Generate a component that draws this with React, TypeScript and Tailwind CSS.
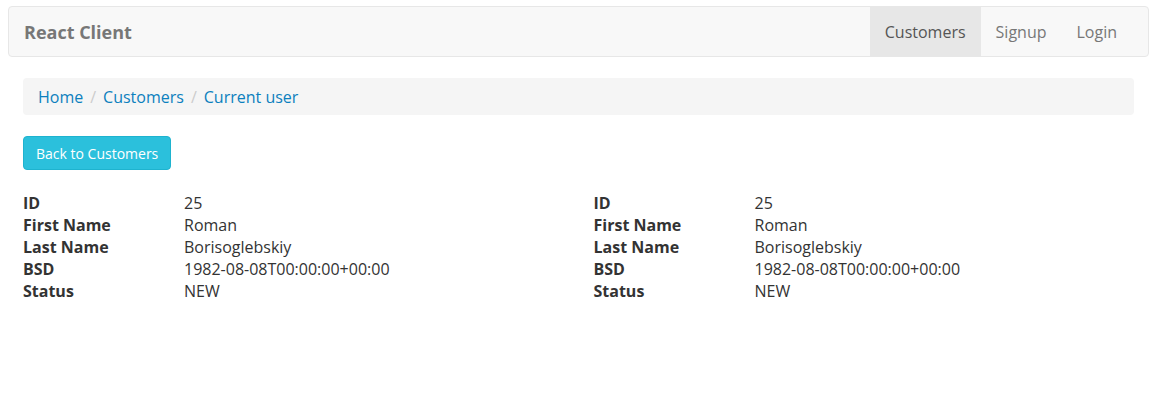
import React from "react";

const rows: [string, string][] = [
  ["ID", "25"],
  ["First Name", "Roman"],
  ["Last Name", "Borisoglebskiy"],
  ["BSD", "1982-08-08T00:00:00+00:00"],
  ["Status", "NEW"],
];

function Details() {
  return (
    <div className="flex flex-col">
      {rows.map(([k, v]) => (
        <div key={k} className="flex leading-[22px]">
          <div className="w-[161px] font-bold text-[#333]">{k}</div>
          <div className="text-[#333]">{v}</div>
        </div>
      ))}
    </div>
  );
}

export default function App() {
  return (
    <div
      className="min-h-[414px] bg-white text-[16px] text-[#333]"
      style={{ fontFamily: '"Open Sans", "Noto Sans", sans-serif' }}
    >
      <div className="pt-[6px] px-[8px]">
        <nav className="flex h-[51px] items-stretch justify-between rounded-[4px] border border-[#e7e7e7] bg-[#f8f8f8] pl-[15px] pr-[16px]">
          <div className="flex items-center pt-[1px] text-[18px] font-bold text-[#777]">React Client</div>
          <ul className="flex items-stretch">
            <li className="flex items-center bg-[#e7e7e7] px-[15px] text-[#555]">Customers</li>
            <li className="flex items-center px-[15px] text-[#777]">Signup</li>
            <li className="flex items-center px-[15px] text-[#777]">Login</li>
          </ul>
        </nav>
      </div>
      <div className="px-[23px] pt-[21px]">
        <div className="flex h-[37px] items-center rounded-[4px] bg-[#f5f5f5] px-[15px]">
          <a className="text-[#0c80be]">Home</a>
          <span className="px-[7px] text-[#ccc]">/</span>
          <a className="text-[#0c80be]">Customers</a>
          <span className="px-[7px] text-[#ccc]">/</span>
          <a className="text-[#0c80be]">Current user</a>
        </div>
        <div className="mt-[21px]">
          <button className="h-[34px] rounded-[4px] border border-[#1eb3cf] bg-[#2bc0dc] px-[12px] text-[14px] text-white">
            Back to Customers
          </button>
        </div>
        <div className="mt-[22px] grid grid-cols-2 gap-[30px]">
          <Details />
          <Details />
        </div>
      </div>
    </div>
  );
}
